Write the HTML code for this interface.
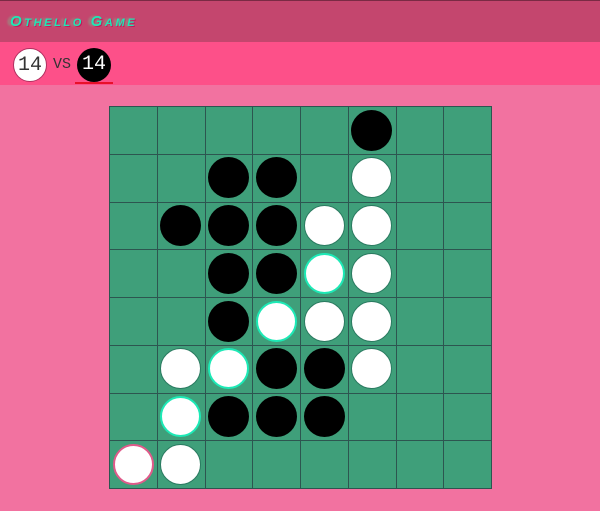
<!DOCTYPE html>
<html><head><style>
html,body{margin:0;padding:0;width:600px;height:511px;overflow:hidden;background:#f272a0;font-family:"Liberation Sans",sans-serif}
.hdr{position:absolute;left:0;top:0;width:600px;height:42px;background:#c4466e;border-top:1px solid #7a2a44;box-sizing:border-box}
.title{position:absolute;left:10px;top:12px;font-size:15px;font-weight:bold;font-style:italic;font-variant:small-caps;letter-spacing:2.6px;color:#1de9b6;text-shadow:-3px 0 2px #9a8a80,1px 1px 0 #c2185b}
.bar{position:absolute;left:0;top:42px;width:600px;height:43px;background:#fd5089}
.sc{position:absolute;top:48px;width:34px;height:34px;border-radius:50%;font-family:"Liberation Mono",monospace;font-size:20px;line-height:34px;text-align:center}
.w{left:13px;background:#fff;color:#333;border:1px solid #b03060;box-sizing:border-box}
.b{left:77px;background:#000;color:#fff}
.vs{position:absolute;left:53px;top:56px;font-family:"Liberation Mono",monospace;font-size:15px;color:#333}
.ul{position:absolute;left:75px;top:82px;width:38px;height:2px;background:#e8102a}
.board{position:absolute;left:109px;top:106px;display:grid;grid-template-columns:repeat(8,47.75px);grid-template-rows:repeat(8,47.75px);background:#3f9f7a;border-left:1px solid #2d5550;border-top:1px solid #2d5550}
.c{border-right:1px solid #2d5550;border-bottom:1px solid #2d5550;box-sizing:border-box;position:relative}
.p{position:absolute;left:2.5px;top:2.5px;width:41px;height:41px;border-radius:50%;box-sizing:border-box}
.k{background:#000}
.h{background:#fff;border:1px solid #2a7a60}
.t{background:#fff;border:2px solid #1de9b6}
.r{background:#fff;border:2px solid #e05a8a}
</style></head><body>
<div class="hdr"><div class="title">Othello Game</div></div>
<div class="bar"></div>
<div class="sc w">14</div><div class="vs">VS</div><div class="sc b">14</div><div class="ul"></div>
<div class="board" id="bd"></div>
<script>
var m=["-----K--","--KK-H--","-KKKHH--","--KKTH--","--KTHH--","-HTKKH--","-TKKK---","RH------"];
var s="";for(var i=0;i<8;i++)for(var j=0;j<8;j++){var ch=m[i][j];s+='<div class="c">'+(ch=='-'?'':'<div class="p '+ch.toLowerCase()+'"></div>')+'</div>';}
document.getElementById('bd').innerHTML=s;
</script>
</body></html>
